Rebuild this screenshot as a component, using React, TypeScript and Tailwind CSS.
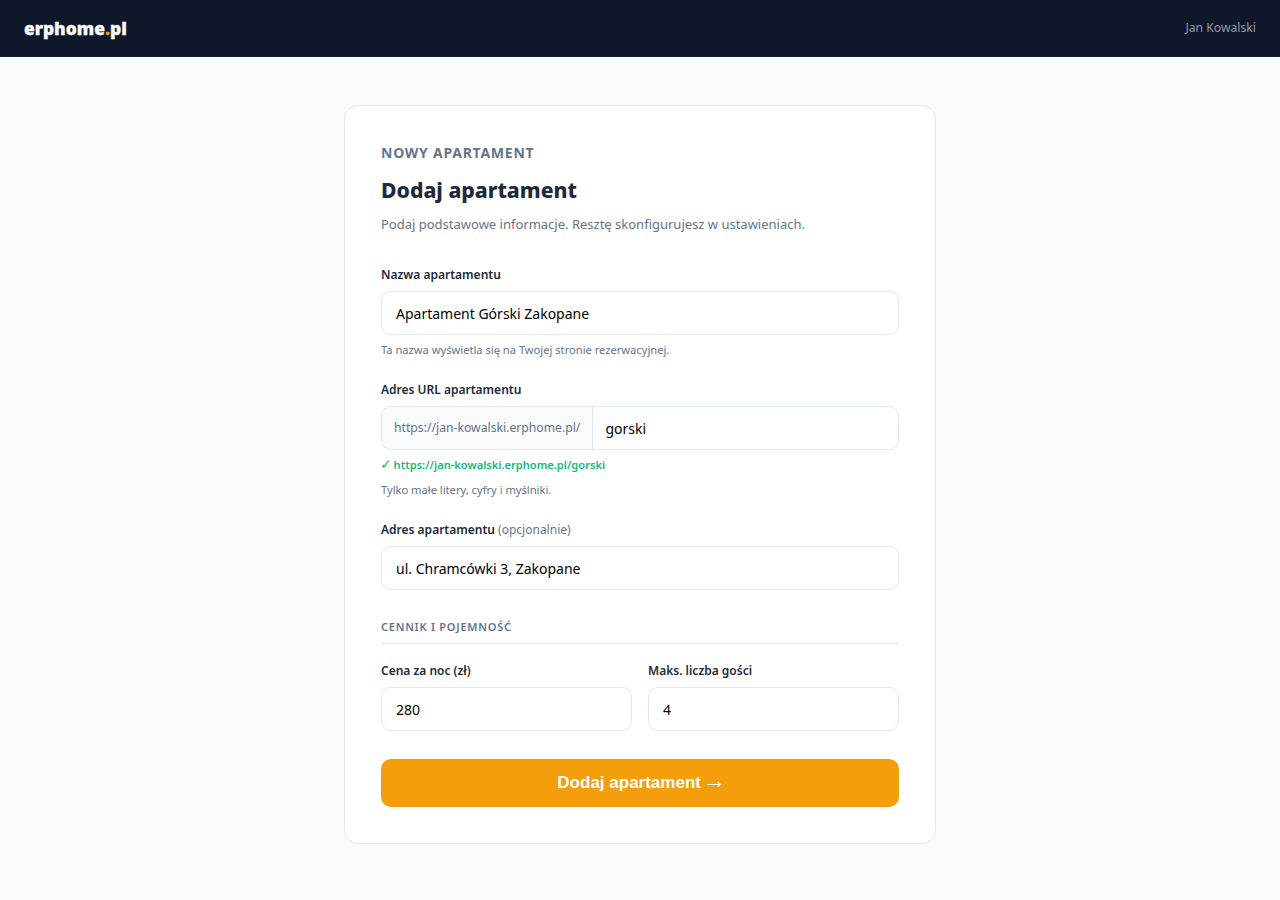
export default function App() {
  const input = "w-full h-[44px] rounded-[10px] border border-[#e2e8f0] bg-white px-[14px] text-[14px] text-black outline-none";
  const label = "block text-[12px] leading-[18px] font-semibold text-[#1e293b] mb-[7px]";
  return (
    <div className="min-h-[900px] bg-[#f8fafc] font-['Noto_Sans',sans-serif]">
      <header className="h-[57px] bg-[#0f172a] flex items-center justify-between px-[24px]">
        <div className="text-[17.4px] font-black text-white [-webkit-text-stroke:0.3px]">erphome<span className="text-[#f59e0b]">.</span>pl</div>
        <div className="text-[12.2px] text-[#8f97a6]">Jan Kowalski</div>
      </header>
      <main className="flex justify-center pt-[48px]">
        <div className="w-[592px] h-[739px] bg-white border border-[#e2e8f0] rounded-[14px] px-[36px] pt-[37px]">
          <div className="text-[14px] leading-[20px] font-bold tracking-[0.75px] text-[#64748b]">NOWY APARTAMENT</div>
          <h1 className="mt-[12px] text-[21.2px] leading-[30px] font-extrabold text-[#1e293b]">Dodaj apartament</h1>
          <p className="mt-[9px] text-[13px] leading-[20px] text-[#64748b]">Podaj podstawowe informacje. Resztę skonfigurujesz w ustawieniach.</p>
          <div className="mt-[32px]">
            <label className={label}>Nazwa apartamentu</label>
            <input className={input} readOnly value="Apartament Górski Zakopane" />
            <p className="mt-[7px] text-[11.15px] leading-[15px] text-[#64748b]">Ta nazwa wyświetla się na Twojej stronie rezerwacyjnej.</p>
          </div>
          <div className="mt-[24px]">
            <label className={label}>Adres URL apartamentu</label>
            <div className="flex h-[44px] rounded-[10px] border border-[#e2e8f0] overflow-hidden">
              <span className="flex items-center px-[12px] bg-[#f8fafc] border-r border-[#e2e8f0] text-[12.2px] text-[#64748b] whitespace-nowrap">https://jan-kowalski.erphome.pl/</span>
              <input className="flex-1 min-w-0 px-[12px] text-[14px] text-black outline-none" readOnly value="gorski" />
            </div>
            <p className="mt-[6px] text-[11.1px] leading-[18px] font-semibold text-[#10b981]"><span className="text-[14px] leading-[0] font-bold font-['DejaVu_Sans',sans-serif] -ml-[1px] -mr-[1px]">✓</span> https://jan-kowalski.erphome.pl/gorski</p>
            <p className="mt-[8px] text-[11.15px] leading-[15px] text-[#64748b]">Tylko małe litery, cyfry i myślniki.</p>
          </div>
          <div className="mt-[24px]">
            <label className={label}>Adres apartamentu <span className="font-normal text-[#64748b]">(opcjonalnie)</span></label>
            <input className={input} readOnly value="ul. Chramcówki 3, Zakopane" />
          </div>
          <div className="mt-[28px] pb-[8px] border-b border-[#e2e8f0] text-[11px] leading-[17px] font-semibold tracking-[0.75px] text-[#64748b]">CENNIK I POJEMNOŚĆ</div>
          <div className="mt-[18px] grid grid-cols-2 gap-[16px]">
            <div>
              <label className={label}>Cena za noc (zł)</label>
              <input className={input} readOnly value="280" />
            </div>
            <div>
              <label className={label}>Maks. liczba gości</label>
              <input className={input} readOnly value="4" />
            </div>
          </div>
          <button className="mt-[28px] w-full h-[48px] pb-[2px] rounded-[10px] bg-[#f59e0b] text-white text-[17px] leading-[24px] font-bold font-['Liberation_Sans',sans-serif]">Dodaj apartament <span className="font-normal text-[23px] leading-[20px] -mx-[3px]">→</span></button>
        </div>
      </main>
    </div>
  );
}
